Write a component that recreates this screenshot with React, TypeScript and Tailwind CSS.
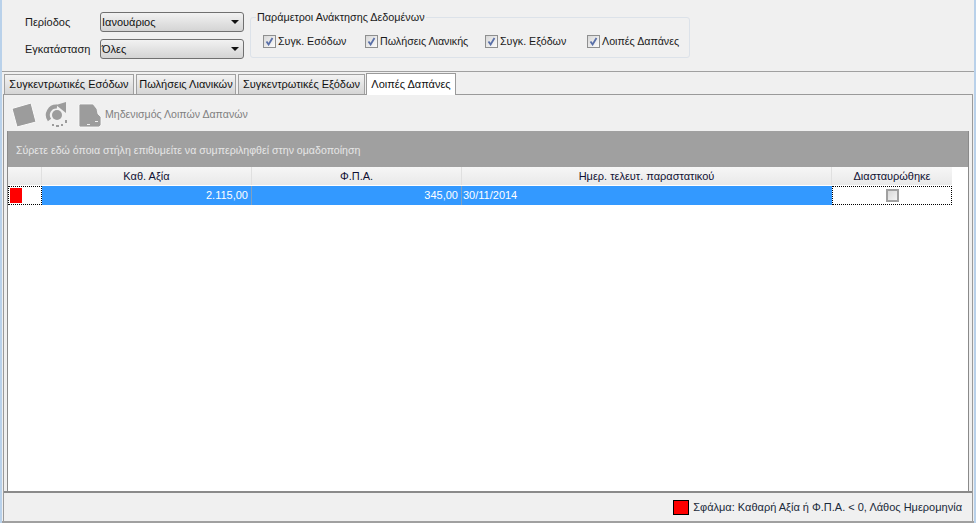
const font = { fontFamily: 'Tahoma, "Liberation Sans", sans-serif' };

const params = [
  { label: 'Συγκ. Εσόδων', w: 'w-[102px]' },
  { label: 'Πωλήσεις Λιανικής', w: 'w-[120px]' },
  { label: 'Συγκ. Εξόδων', w: 'w-[102px]' },
  { label: 'Λοιπές Δαπάνες', w: 'w-[100px]' },
];

const headerCell = 'bg-gradient-to-b from-[#f6f6f6] to-[#e9e9e9] border-r border-[#e0e0e0] flex items-center justify-center';

function Combo({ value }: { value: string }) {
  return (
    <div className="h-[20px] w-[144px] flex items-center justify-between rounded-[3px] border border-[#707070] bg-gradient-to-b from-[#f2f2f2] to-[#d4d4d4] pl-[1px] pr-[4px]">
      <span className="text-[11px] text-[#111111]">{value}</span>
      <svg width="8" height="4" viewBox="0 0 8 4"><path d="M0 0h8L4 4z" fill="#111111" /></svg>
    </div>
  );
}

function CheckBox({ label, w }: { label: string; w: string }) {
  return (
    <div className={`flex items-center gap-[2px] ${w}`}>
      <div className="w-[13px] h-[13px] border border-[#8e8f8f] bg-gradient-to-br from-[#d8d8d8] to-[#fbfbfb] flex items-center justify-center">
        <svg width="9" height="9" viewBox="0 0 9 9"><path d="M1.5 4.5 3.6 7.5 7.5 1" fill="none" stroke="#5a70a8" strokeWidth="1.8" /></svg>
      </div>
      <span className="text-[10.7px] text-[#1a1a1a] whitespace-nowrap">{label}</span>
    </div>
  );
}

function Tab({ label, w, active }: { label: string; w: string; active?: boolean }) {
  if (active) {
    return (
      <div className={`${w} h-[22px] -mb-[1px] -ml-[1px] z-10 border border-b-0 border-[#9a9a9a] bg-white flex items-center justify-center text-[11px] text-[#111111]`}>
        {label}
      </div>
    );
  }
  return (
    <div className={`${w} h-[20px] mr-[2px] border border-b-0 border-[#a0a0a0] bg-gradient-to-b from-[#f3f3f3] to-[#d5d5d5] flex items-center justify-center text-[11px] text-[#111111]`}>
      {label}
    </div>
  );
}

// disabled toolbar glyphs: greyed out with a pale halo
function ToolbarIcons() {
  return (
    <>
      <svg width="26" height="26" viewBox="0 0 26 26" className="ml-[4px]">
        <path d="M1 6.5 20 1 25 20 6 25z" fill="#9c9c9c" stroke="#fafafa" strokeWidth="1" />
      </svg>
      <svg width="24" height="26" viewBox="0 0 24 26" className="ml-[8px]">
        <path d="M12 4.5A8.5 8.5 0 0 0 4.5 18" fill="none" stroke="#9c9c9c" strokeWidth="4" />
        <circle cx="12" cy="13" r="5" fill="#9c9c9c" />
        <path d="M11 3 21 0V11z" fill="#9c9c9c" />
        <path d="M7 22h2v2H7zM11 23h3v2h-3zM16 22h2v2h-2zM20 18h2v3h-2z" fill="#9c9c9c" />
      </svg>
      <svg width="24" height="25" viewBox="0 0 24 25" className="ml-[9px]">
        <path d="M1 2 2 1H15L19 6 20 11 23 14 23 22 21 24 2 24 1 23z" fill="#9c9c9c" stroke="#fafafa" strokeWidth="0.8" />
        <path d="M9 21h3v1H9zM17 18h3v1h-3z" fill="#f0f0f0" />
      </svg>
    </>
  );
}

export default function App() {
  return (
    <div style={font} className="w-[976px] h-[523px] overflow-hidden flex flex-col bg-[#f0f0f0] border-x-2 border-[#b9d1ea]">
      {/* Filters */}
      <div className="h-[71px] shrink-0 flex pl-[23px] pt-[12px]">
        <div className="flex flex-col gap-[7px] w-[75px] text-[11px] text-[#1a1a1a]">
          <div className="h-[20px] flex items-center">Περίοδος</div>
          <div className="h-[20px] flex items-center">Εγκατάσταση</div>
        </div>
        <div className="flex flex-col gap-[7px]">
          <Combo value="Ιανουάριος" />
          <Combo value="Όλες" />
        </div>
        <fieldset className="ml-[6px] -mt-[1px] w-[440px] h-[47px] rounded-[3px] border border-[#dce2e9] pl-[12px] pt-[9px]">
          <legend className="ml-[-7px] text-[10.8px] text-[#1a1a1a] leading-[13px] px-[1px]">Παράμετροι Ανάκτησης Δεδομένων</legend>
          <div className="flex">
            {params.map((p) => (
              <CheckBox key={p.label} label={p.label} w={p.w} />
            ))}
          </div>
        </fieldset>
      </div>

      {/* Tabs */}
      <div className="h-[23px] shrink-0 border-t border-[#a0a0a0] flex items-end -mx-[2px] pl-[4px]">
        <Tab label="Συγκεντρωτικές Εσόδων" w="w-[130px]" />
        <Tab label="Πωλήσεις Λιανικών" w="w-[100px]" />
        <Tab label="Συγκεντρωτικές Εξόδων" w="w-[127px]" />
        <Tab label="Λοιπές Δαπάνες" w="w-[90px]" active />
      </div>

      {/* Tab page */}
      <div className="flex-1 flex flex-col border-t border-x border-[#9a9a9a] mx-[1px] px-[3px] min-h-0">
        <div className="h-[36px] shrink-0 flex items-center pt-[4px]">
          <ToolbarIcons />
          <span className="ml-[3px] text-[10.6px] text-[#808080]">Μηδενισμός Λοιπών Δαπανών</span>
        </div>
        <div className="flex-1 flex flex-col border-x border-[#8a8a8a] bg-white min-h-0">
          <div className="h-[36px] shrink-0 bg-[#a0a0a0] flex items-center pl-[8px] pt-[3px] text-[10.6px] text-[#e6e6e6]">
            Σύρετε εδώ όποια στήλη επιθυμείτε να συμπεριληφθεί στην ομαδοποίηση
          </div>
          {/* Grid header */}
          <div className="flex h-[18px] shrink-0 w-[944px] text-[11px] text-[#111133]">
            <div className={`w-[34px] ${headerCell}`} />
            <div className={`w-[210px] ${headerCell}`}>Καθ. Αξία</div>
            <div className={`w-[210px] ${headerCell}`}>Φ.Π.Α.</div>
            <div className={`w-[370px] ${headerCell}`}>Ημερ. τελευτ. παραστατικού</div>
            <div className={`flex-1 ${headerCell} border-r-0`}>Διασταυρώθηκε</div>
          </div>
          {/* Selected row */}
          <div className="flex h-[20px] shrink-0 w-[944px] text-[11px] text-white pt-[1px]">
            <div className="w-[34px] border border-dotted border-black bg-white pl-[1px] flex items-center">
              <div className="w-[12px] h-[15px] bg-[#ff0000]" />
            </div>
            <div className="w-[210px] bg-[#3399ff] border-r border-[#80a0c0] flex items-center justify-end pr-[3px]">2.115,00</div>
            <div className="w-[210px] bg-[#3399ff] border-r border-[#80a0c0] flex items-center justify-end pr-[3px]">345,00</div>
            <div className="w-[370px] bg-[#3399ff] flex items-center pl-[1px]">30/11/2014</div>
            <div className="flex-1 border border-dotted border-black bg-white flex items-center justify-center">
              <div className="w-[13px] h-[13px] border-2 border-[#a0a0a0] bg-gradient-to-br from-[#d8d8d8] to-[#f4f4f4]" />
            </div>
          </div>
          <div className="flex-1" />
        </div>
        {/* Legend strip */}
        <div className="h-[30px] shrink-0 -mx-[3px] border-t-2 border-[#8a8a8a] flex items-center justify-end pr-[10px] gap-[4px] text-[11px] text-[#1a2a3a]">
          <div className="w-[16px] h-[15px] bg-[#ff0000] border border-black" />
          <span>Σφάλμα: Καθαρή Αξία ή Φ.Π.Α. &lt; 0, Λάθος Ημερομηνία</span>
        </div>
      </div>
      <div className="h-[2px] shrink-0 bg-[#a0a0a0]" />
    </div>
  );
}
